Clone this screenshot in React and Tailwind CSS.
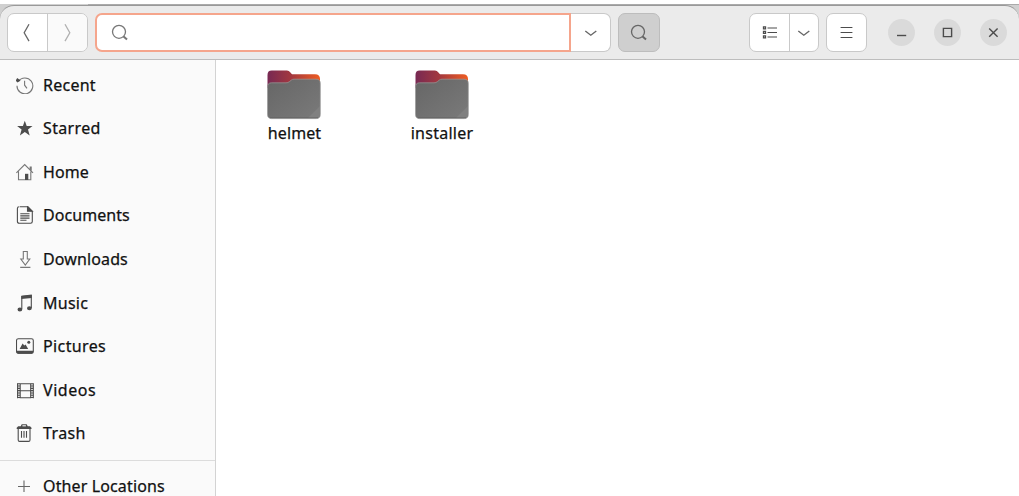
import React from "react";

const INK = "#4c4c4c";

function Icon({ w = 18, children, size = 18, color = INK, sw = 1.1 }) {
  return (
    <svg width={size} height={size} viewBox={`0 0 ${w} ${w}`} fill="none" stroke={color} strokeWidth={sw} className="shrink-0">
      {children}
    </svg>
  );
}

const Search = ({ color = "#777" }) => (
  <Icon color={color} sw={1.3}>
    <circle cx="8" cy="7.8" r="6.5" />
    <path d="M12.6 12.5 L16 15.6" strokeWidth="2" />
  </Icon>
);

const ChevronDown = () => (
  <Icon sw={1.4} color="#666">
    <path d="M3.3 7 L8.8 11.2 L14.3 7" />
  </Icon>
);

const places = [
  ["Recent", "tracking-[0.26px]", (
    <>
      <path d="M2.4 5.4 A7.9 7.9 0 1 1 1 9.8 M8.6 4.8 V9.2 L11 12.4" stroke="#777" />
      <path d="M-0.3 4.6 L1.2 2 L4.6 4.6 L1.5 6.5Z" fill={INK} stroke="none" />
    </>
  )],
  ["Starred", "tracking-[0.36px]", (
    <path d="M8.8 1.8 L10.7 7 L16.5 7.1 L12 10.6 L13.7 16.4 L8.8 13 L3.9 16.4 L5.6 10.6 L1.1 7.1 L6.9 7Z" fill={INK} stroke="none" />
  )],
  ["Home", "tracking-[0.12px]", (
    <>
      <path d="M.4 9.8 L8.7 1.5 L17 9.8 M2.5 8.5 V16.8 H14.8 V8.5 M14.2 6.5 V4 H15.2 V7.5" stroke="#777" />
      <path d="M9 17 V10.8 H12.3 V17Z" fill={INK} stroke="none" />
    </>
  )],
  ["Documents", "tracking-[0.06px]", (
    <>
      <path d="M3.8 .8 H12 L16.3 5.4 V15.5 Q16.3 17.2 14.6 17.2 H3.2 Q1.4 17.2 1.4 15.5 V2.5 Q1.4 .8 3.2 .8" />
      <path d="M11.5 .8 V5.2 H16.3Z" fill={INK} />
      <path d="M4.3 7.7 H13.5 M4.3 9.9 H13.5 M4.3 12.1 H13.5 M4.3 14.3 H10.5" />
    </>
  )],
  ["Downloads", "tracking-[0.12px]", (
    <path d="M7.3 1.5 H11.3 V9 H13.8 L9.3 15 L4.8 9 H7.3Z M4.2 17.4 H14.4" stroke="#777" />
  )],
  ["Music", "tracking-[0.25px]", (
    <>
      <path d="M5.8 15 V2.5 L15.3 1.5 V14" />
      <path d="M5.3 1.8 L15.8 .6 V4 L5.3 5Z M6.3 15.6 a2.4 2 0 1 1 -4.8 0 a2.4 2 0 1 1 4.8 0 M15.8 14.2 a2.4 2 0 1 1 -4.8 0 a2.4 2 0 1 1 4.8 0" fill={INK} stroke="none" />
    </>
  )],
  ["Pictures", "tracking-[0.38px]", (
    <>
      <rect x=".5" y="1.8" width="16.8" height="14.4" rx="1.8" />
      <path d="M.5 13.8 H17.3 V15.5 L16 16.8 H1.8 L.5 15.5Z M3.6 12 L6.6 6.5 L8.3 8.5 L9.6 7.5 L12.2 12Z" fill={INK} stroke="none" />
      <circle cx="12.8" cy="5.2" r="1.5" fill={INK} stroke="none" />
    </>
  )],
  ["Videos", "tracking-[0.55px]", (
    <>
      <path d="M4.2 2.7 H14.7 V16.7 H4.2Z M4.2 9.7 H14.7" />
      <path d="M1.6 2.2 V17.2 M17.3 2.2 V17.2" />
      <path d="M2.8 2.2 V17.2 M16 2.2 V17.2" strokeWidth="2.4" strokeDasharray="1.1 1.2" />
    </>
  )],
  ["Trash", "tracking-[0.4px]", (
    <>
      <path d="M2.2 5 V16 Q2.2 17.4 3.6 17.4 H12.6 Q14 17.4 14 16 V5 M5.5 7 V13.7 M8 7 V13.7 M10.5 7 V13.7" />
      <path d="M.7 5 V3.8 L2.2 2.3 H4.7 L5.7 .3 H10.7 L11.7 2.3 H14 L15.5 3.8 V5Z" fill={INK} stroke="none" />
      <path d="M6.4 1.8 H9.9" stroke="#fafafa" />
    </>
  )],
];

function Folder({ name, track }) {
  const id = "g" + name;
  return (
    <div className="flex w-[148px] flex-col items-center">
      <svg width="54" height="50" viewBox="0 0 54 50">
        <defs>
          <linearGradient id={id}>
            <stop offset="0" stopColor="#772953" />
            <stop offset=".45" stopColor="#a3383f" />
            <stop offset="1" stopColor="#ef5d22" />
          </linearGradient>
          <linearGradient id={id + "f"} x1="0" y1="0" x2="1" y2="1">
            <stop offset="0" stopColor="#666" />
            <stop offset="1" stopColor="#7a7a7a" />
          </linearGradient>
        </defs>
        <path d="M.5 18 V5 Q.5 .6 4.7 .6 H20 Q22 .6 23.2 2.2 L25 4.2 H48 Q53 4.2 53 9 V20Z" fill={`url(#${id})`} />
        <path d="M.5 17 Q.5 12.8 4.5 12.8 H19 Q21 12.8 22.5 11.6 L24.4 10 Q25.3 9.2 27 9.2 H49 Q53.3 9.2 53.3 13.2 V44.5 Q53.3 48.6 49.3 48.6 H4.5 Q.5 48.6 .5 44.5Z" fill={`url(#${id}f)`} stroke="#9a9a9a" strokeWidth=".7" />
        <path d="M53 36 L41 48 H49 Q53 48 53 44.5Z" fill="#808080" />
        <path d="M3 47.8 H51" stroke="#5d5d5d" strokeWidth=".6" />
      </svg>
      <span className={`mt-[2px] text-[16px] leading-[22px] ${track}`}>{name}</span>
    </div>
  );
}

const box = "flex h-[39px] shrink-0 items-center rounded-[7px] border border-[#c9c9c9] bg-white";

export default function App() {
  return (
    <div className="flex h-[496px] w-[1019px] flex-col overflow-hidden bg-white font-['Noto_Sans','Open_Sans',sans-serif] text-[#111] [-webkit-text-stroke:0.25px_#111]">
      <div className="h-[4px] shrink-0 bg-white" />
      <div className="flex h-[56px] shrink-0 flex-col bg-[#d0d0d0]">
        <div className="flex h-[1px] shrink-0">
          <div className="w-[88px] bg-[#d0d0d0]" />
          <div className="flex-1 bg-[#aaaaaa]" />
        </div>
        <header className="flex h-[55px] items-center rounded-t-[14px] border-b border-t border-b-[#bdbdbd] border-t-[#999] bg-[#ebebeb] pl-[7px]">
          <div className={`${box} w-[81px]`}>
            <div className="flex h-full w-[40px] items-center justify-center border-r border-[#c9c9c9]">
              <Icon sw={1.3} color="#666"><path d="M10 .3 L5.2 8.7 L10 17.1" /></Icon>
            </div>
            <div className="flex h-full flex-1 items-center justify-center rounded-r-md bg-[#fafafa]">
              <Icon sw={1.3} color="#b0b0b0"><path d="M6 .3 L10.8 8.7 L6 17.1" /></Icon>
            </div>
          </div>
          <div className="ml-[7px] flex h-[39px] w-[476px] items-center rounded-l-[7px] border-2 border-[#f5a58c] bg-white pl-[14px]">
            <Search />
          </div>
          <div className="flex h-[39px] w-[40px] items-center justify-center rounded-r-[7px] border border-l-0 border-[#c9c9c9] bg-white"><ChevronDown /></div>
          <div className="ml-[7px] flex h-[39px] w-[42px] items-center justify-center rounded-[7px] border border-[#bdbdbd] bg-[#cfcfcf]"><Search color="#666" /></div>
          <div className={`${box} ml-[89px] w-[70px]`}>
            <div className="flex h-full w-[40px] items-center justify-center border-r border-[#c9c9c9]">
              <Icon><path d="M2.5 2.8h2v2h-2z M2.5 7.3h2v2h-2z M2.5 11.8h2v2h-2z" strokeWidth="1.3" /><path d="M6.5 4 H16 M6.5 8.5 H16 M6.5 13 H16" /></Icon>
            </div>
            <div className="flex flex-1 justify-center"><ChevronDown /></div>
          </div>
          <div className={`${box} ml-[7px] w-[41px] justify-center`}>
            <Icon><path d="M2.6 3.5 H14.4 M2.6 8.5 H14.4 M2.6 13.5 H14.4" /></Icon>
          </div>
          <div className="ml-[21px] flex gap-[19px]">
            {["M4 11.5 H13.2", "M4.4 4.4 H12.6 V12.6 H4.4Z", "M4.2 4.4 L12.6 12.8 M12.6 4.4 L4.2 12.8"].map((d) => (
              <div key={d} className="flex size-[27px] items-center justify-center rounded-full bg-[#dadada]">
                <Icon sw={1.4}><path d={d} /></Icon>
              </div>
            ))}
          </div>
        </header>
      </div>
      <div className="flex min-h-0 flex-1">
        <nav className="w-[216px] shrink-0 overflow-hidden border-r border-[#d3d3d3] bg-[#fafafa] pt-[3px] text-[16px]">
          {places.map(([name, track, icon]) => (
            <div key={name} className="flex h-[43.55px] items-center gap-[9px] pl-[16px]">
              <Icon>{icon}</Icon>
              <span className={`${track} whitespace-nowrap`}>{name}</span>
            </div>
          ))}
          <div className="mt-[5px] border-t border-[#dcdcdc]" />
          <div className="mt-[16px] flex h-[18px] items-center gap-[9px] pl-[16px] leading-[18px]">
            <Icon color="#666"><path d="M8 3.5 V15 M2 9.5 H14" /></Icon>
            <span className="whitespace-nowrap tracking-[0.13px]">Other Locations</span>
          </div>
        </nav>
        <main className="flex flex-1 items-start pl-[4px] pt-[10px]">
          <Folder name="helmet" track="tracking-[0.1px] pl-px" />
          <Folder name="installer" track="tracking-[0.25px]" />
        </main>
      </div>
    </div>
  );
}
